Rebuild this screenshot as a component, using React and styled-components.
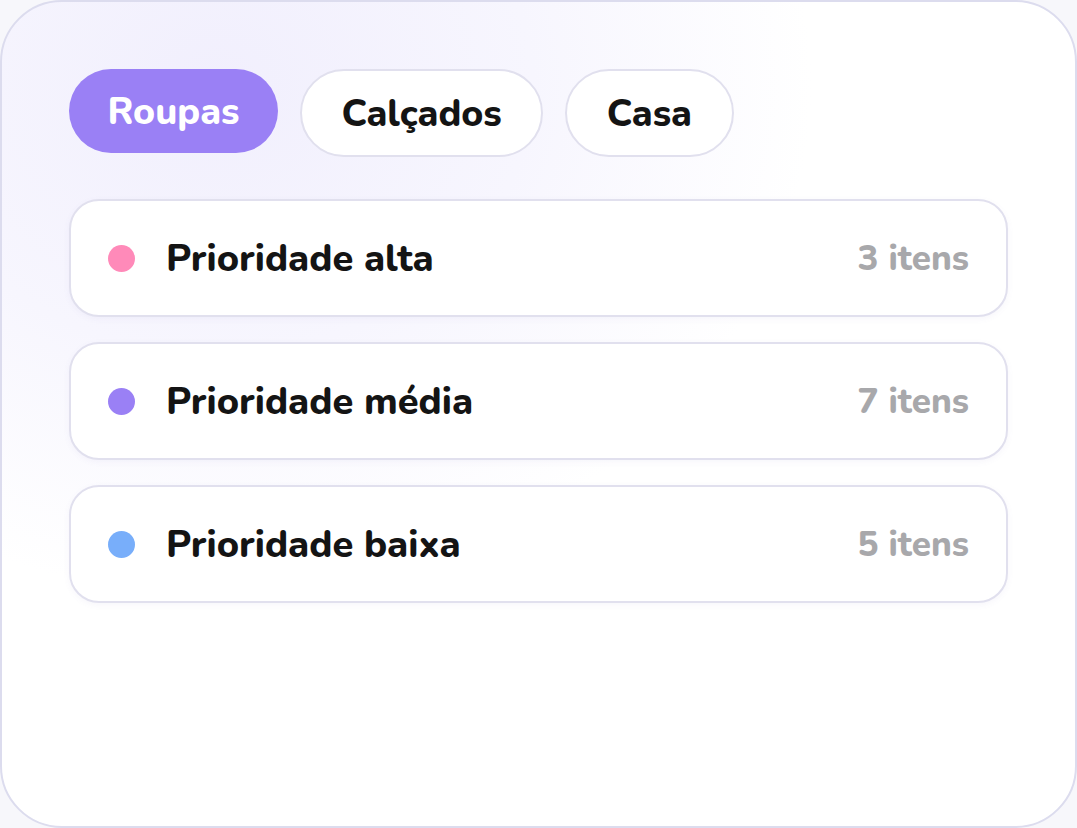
import React, { useState } from "react";
import styled, { createGlobalStyle } from "styled-components";

const GlobalStyle = createGlobalStyle`
  html, body {
    margin: 0;
    padding: 0;
    background: #f7f7fb;
  }
  * {
    box-sizing: border-box;
  }
`;

const tabs = ["Roupas", "Calçados", "Casa"];

const groups = [
  { label: "Prioridade alta", count: 3, color: "#ff8ab9" },
  { label: "Prioridade média", count: 7, color: "#9a80f5" },
  { label: "Prioridade baixa", count: 5, color: "#78aefa" },
];

const App = () => {
  const [active, setActive] = useState("Roupas");

  return (
    <>
      <GlobalStyle />
      <Card>
        <TabBar>
          {tabs.map((t) => (
            <Tab key={t} $active={active === t} onClick={() => setActive(t)}>
              {t}
            </Tab>
          ))}
        </TabBar>
        <List>
          {groups.map((g) => (
            <Row key={g.label}>
              <Dot $color={g.color} />
              <Label>{g.label}</Label>
              <Count>{g.count} itens</Count>
            </Row>
          ))}
        </List>
      </Card>
    </>
  );
};

export default App;

const Card = styled.section`
  width: 1077px;
  height: 828px;
  border: 2px solid #dcdcee;
  border-radius: 62px;
  padding: 67px 67px;
  background: radial-gradient(
      ellipse 700px 600px at 20% 10%,
      #f1effd 0%,
      #f7f6fe 45%,
      #ffffff 85%
    ),
    #ffffff;
  font-family: "Nunito", "Lato", "Noto Sans", sans-serif;
  display: flex;
  flex-direction: column;
  gap: 42px;
`;

const TabBar = styled.div`
  display: flex;
  align-items: flex-start;
  gap: 22px;
`;

const Tab = styled.button`
  height: ${(p) => (p.$active ? "84px" : "88px")};
  padding: 0 ${(p) => (p.$active ? "38.5px" : "39.5px")};
  border-radius: 44px;
  border: ${(p) => (p.$active ? "none" : "2px solid #e1e0ee")};
  background: ${(p) => (p.$active ? "#9a80f5" : "#ffffff")};
  color: ${(p) => (p.$active ? "#ffffff" : "#141414")};
  font-family: inherit;
  font-size: 37.5px;
  font-weight: 800;
  cursor: pointer;
`;

const List = styled.div`
  display: flex;
  flex-direction: column;
  gap: 25px;
`;

const Row = styled.div`
  height: 118px;
  display: flex;
  align-items: center;
  padding: 0 37px;
  background: #ffffff;
  border: 2px solid #e1e0ee;
  border-radius: 30px;
  box-shadow: 0 2px 6px rgba(120, 110, 180, 0.06);
`;

const Dot = styled.span`
  width: 27px;
  height: 27px;
  border-radius: 50%;
  background: ${(p) => p.$color};
  flex-shrink: 0;
`;

const Label = styled.span`
  margin-left: 31px;
  font-size: 38px;
  font-weight: 800;
  color: #141414;
  flex: 1;
`;

const Count = styled.span`
  font-size: 35px;
  font-weight: 800;
  color: #a8a8ab;
`;
